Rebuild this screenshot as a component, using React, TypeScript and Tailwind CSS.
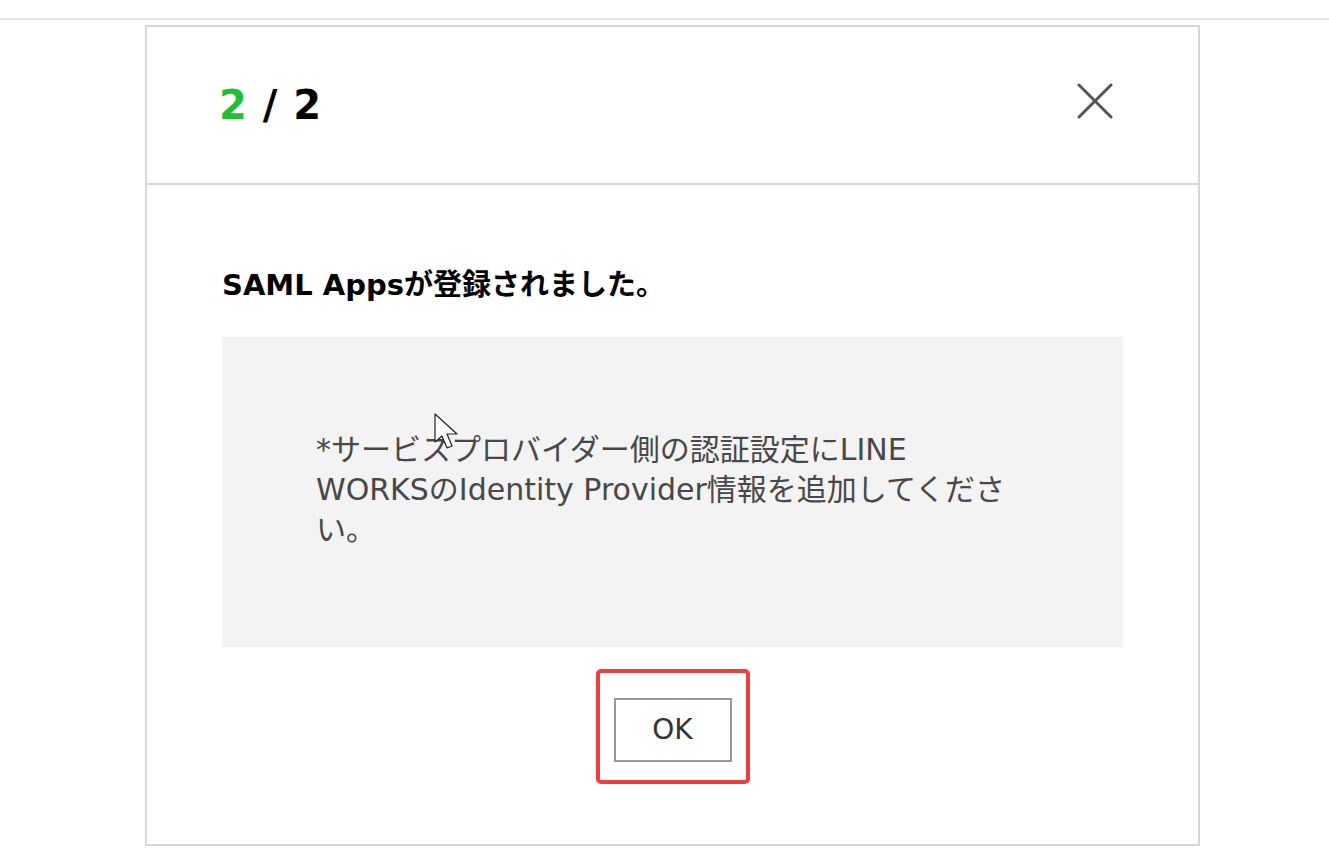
import React from 'react';

const jp = { fontFamily: '"DejaVu Sans", "Noto Sans CJK JP", sans-serif' };

const CloseIcon: React.FC = () => (
  <svg width="38" height="36" viewBox="0 0 38 36" fill="none">
    <path d="M3 2 L35 34 M35 2 L3 34" stroke="#555" strokeWidth="3" strokeLinecap="round" />
  </svg>
);

const Cursor: React.FC = () => (
  <svg width="26" height="40" viewBox="0 0 26 40" className="absolute left-[434px] top-[413px]">
    <path d="M1 1 L1 29 L8 23 L13 35 L18 33 L13 21 L23 21 Z" fill="#fff" stroke="#222" strokeWidth="1.2" strokeLinejoin="round" />
  </svg>
);

export default function App() {
  return (
    <div className="relative min-h-screen bg-white" style={jp}>
      <div className="h-[18px]" />
      <div className="h-[2px] bg-[#e3e3e3]" />
      <div className="pl-[145px] pt-[5px]">
        <div className="flex h-[821px] w-[1055px] flex-col border-2 border-[#d6d6d6] bg-white">
          <div className="flex h-[158px] items-center justify-between border-b-2 border-[#d6d6d6] pl-[72px] pr-[84px]">
            <div className="text-[40px] font-bold leading-none tracking-[1px]">
              <span className="text-[#1fbf35]">2</span>
              <span className="text-black"> / 2</span>
            </div>
            <button className="mb-[8px]">
              <CloseIcon />
            </button>
          </div>

          <div className="flex flex-col px-[75px] pt-[82px]">
            <h2 className="text-[29px] font-bold leading-[36px] text-black">SAML Appsが登録されました。</h2>
            <div className="mt-[34px] flex h-[310px] items-center bg-[#f3f3f3] pl-[94px] pr-[30px]">
              <p className="-mt-[4px] text-[30px] leading-[40px] text-[#484848]">
                *サービスプロバイダー側の認証設定にLINE
                <br />
                WORKSのIdentity Provider情報を追加してくださ
                <br />
                い。
              </p>
            </div>
            <div className="mt-[22px] flex justify-center">
              <div className="rounded-[5px] border-4 border-[#ec3f3f] px-[14px] pb-[18px] pt-[25px]">
                <button className="flex h-[64px] w-[118px] items-center justify-center border-2 border-[#999] bg-white text-[28px] text-[#333]">
                  OK
                </button>
              </div>
            </div>
          </div>
        </div>
      </div>
      <Cursor />
    </div>
  );
}
